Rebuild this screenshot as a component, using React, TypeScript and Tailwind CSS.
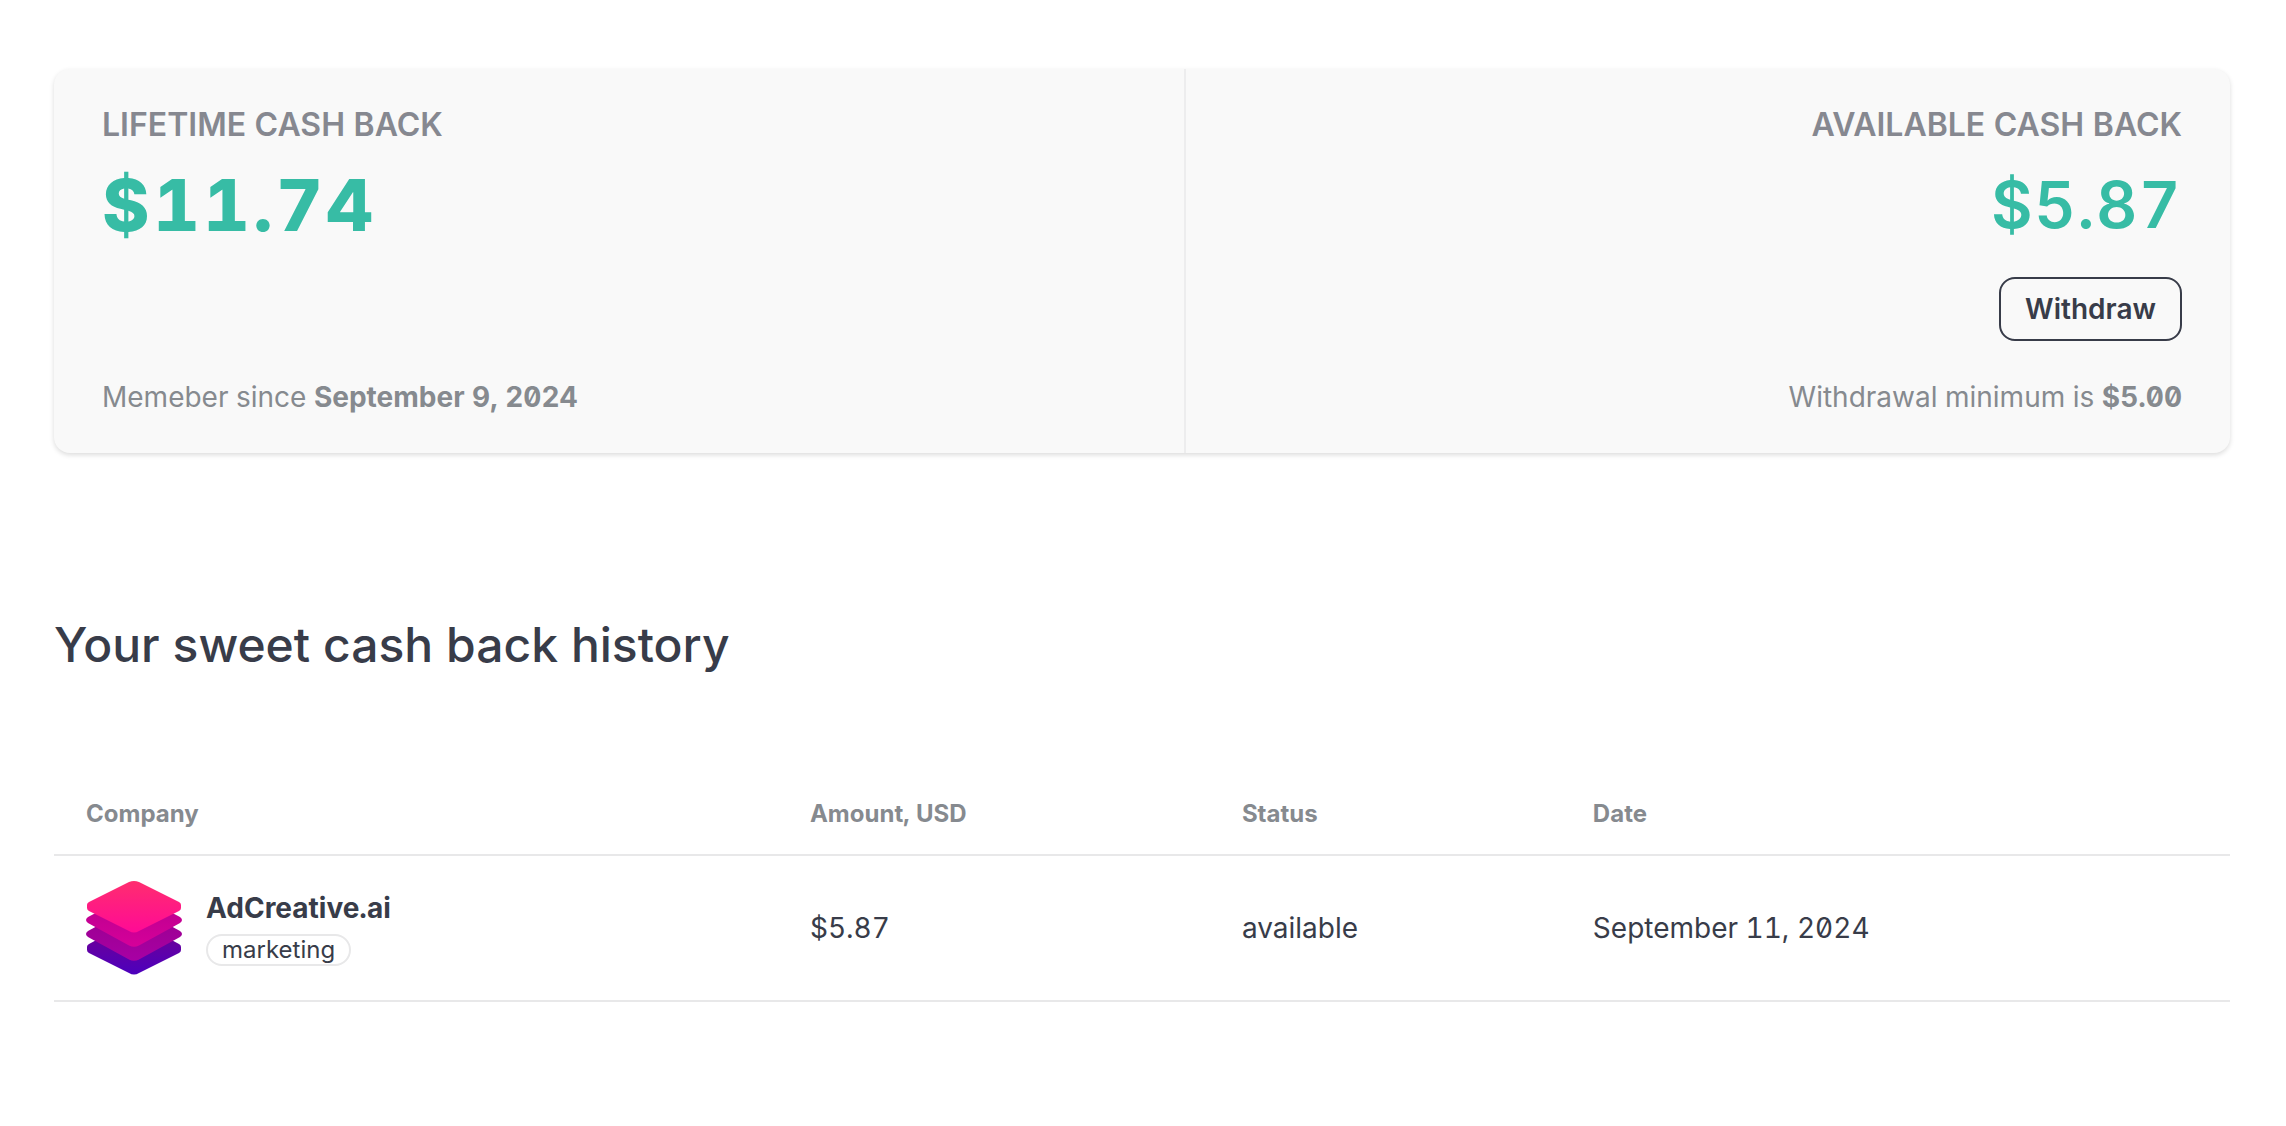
import type { ReactNode } from "react";

type Entry = {
  company: string;
  tag: string;
  amount: string;
  status: string;
  date: string;
};

const history: Entry[] = [
  {
    company: "AdCreative.ai",
    tag: "marketing",
    amount: "$5.87",
    status: "available",
    date: "September 11, 2024",
  },
];

function LayersLogo() {
  return (
    <svg viewBox="0 0 96 96" className="h-24 w-24 shrink-0" aria-hidden>
      <defs>
        <linearGradient id="l1" x1="0" y1="0" x2="0" y2="1">
          <stop offset="0" stopColor="#ff2d6f" />
          <stop offset="1" stopColor="#ff0a96" />
        </linearGradient>
        <linearGradient id="l2" x1="0" y1="0" x2="0" y2="1">
          <stop offset="0" stopColor="#b5008c" />
          <stop offset="1" stopColor="#d6009a" />
        </linearGradient>
        <linearGradient id="l3" x1="0" y1="0" x2="0" y2="1">
          <stop offset="0" stopColor="#98008c" />
          <stop offset="1" stopColor="#a800a4" />
        </linearGradient>
        <linearGradient id="l4" x1="0" y1="0" x2="0" y2="1">
          <stop offset="0" stopColor="#78008c" />
          <stop offset="1" stopColor="#4c00bd" />
        </linearGradient>
      </defs>
      <path
        fill="url(#l4)"
        d="M1 67Q1 65 3 64L44 42Q48 40 52 42L93 64Q95 65 95 67V70Q95 72 93 73L53 93Q48 96 43 93L3 73Q1 72 1 70Z"
      />
      <path
        fill="url(#l3)"
        d="M2 51Q-2 54 2 57L43 79.500Q48 82 53 79.500L94 57Q98 54 94 51L52 28Q48 26 44 28Z"
      />
      <path
        fill="url(#l2)"
        d="M2 37Q-2 40 2 43L43 65.500Q48 68 53 65.500L94 43Q98 40 94 37L52 15Q48 12 44 15Z"
      />
      <path
        fill="url(#l1)"
        d="M1 25Q1 23 3 22L43 2Q48 0 53 2L93 22Q95 23 95 25V28Q95 30 93 31L53 51Q48 54 43 51L3 31Q1 30 1 28Z"
      />
    </svg>
  );
}

function Stat({ title, children, note }: { title: string; children: ReactNode; note: ReactNode }) {
  return (
    <div className="flex flex-col px-12 py-8">
      <h2 className="text-[32px] leading-12 font-semibold text-[#868890] uppercase">{title}</h2>
      {children}
      <p className="mt-auto pt-8 text-[28px] leading-12 text-[#868a8f]">{note}</p>
    </div>
  );
}

export default function App() {
  return (
    <main className="min-h-screen bg-white pt-[69px] pr-14 pb-12 pl-[54px] font-['Inter',sans-serif] text-[#383c49] slashed-zero tabular-nums">
      <section className="grid grid-cols-[52fr_48fr] divide-x-2 divide-[#ededee] rounded-2xl bg-[#f9f9f9] shadow-[0_2px_5px_rgba(0,0,0,0.14)]">
        <Stat
          title="Lifetime cash back"
          note={
            <>
              Memeber since <strong className="font-bold">September 9, 2024</strong>
            </>
          }
        >
          <p className="mt-4 text-7xl leading-20 font-extrabold tracking-wider text-[#37bca5]">$11.74</p>
        </Stat>
        <div className="text-right">
          <Stat
            title="Available cash back"
            note={
              <>
                Withdrawal minimum is <strong className="font-bold">$5.00</strong>
              </>
            }
          >
            <p className="mt-4 text-[64px] leading-20 font-semibold tracking-wide text-[#37bca5]">$5.87</p>
            <button
              type="button"
              className="mt-8 h-16 self-end rounded-2xl border-2 border-[#383c49] px-6 text-[28px] font-semibold hover:bg-[#383c49] hover:text-white"
            >
              Withdraw
            </button>
          </Stat>
        </div>
      </section>

      <h1 className="mt-40 text-5xl leading-16 font-medium">Your sweet cash back history</h1>

      <table className="mt-24 w-full table-fixed text-left text-[28px]">
        <thead className="text-2xl text-[#868a8f]">
          <tr className="h-[82px] border-b-2 border-[#e8e8e9]">
            <th className="w-[33.27%] px-8 font-bold">Company</th>
            <th className="w-[19.85%] px-8 font-bold">Amount, USD</th>
            <th className="w-[16.13%] px-8 font-bold">Status</th>
            <th className="px-8 font-bold">Date</th>
          </tr>
        </thead>
        <tbody>
          {history.map((entry) => (
            <tr key={entry.company} className="h-[146px] border-b-2 border-[#e8e8e9]">
              <td className="px-8">
                <div className="flex items-center gap-6">
                  <LayersLogo />
                  <div className="flex flex-col items-start">
                    <span className="leading-9 font-bold">{entry.company}</span>
                    <span className="mt-2 flex h-8 items-center rounded-full border-2 border-[#e8e8e9] px-3.5 text-2xl">
                      {entry.tag}
                    </span>
                  </div>
                </div>
              </td>
              <td className="px-8">{entry.amount}</td>
              <td className="px-8">{entry.status}</td>
              <td className="px-8">{entry.date}</td>
            </tr>
          ))}
        </tbody>
      </table>
    </main>
  );
}
